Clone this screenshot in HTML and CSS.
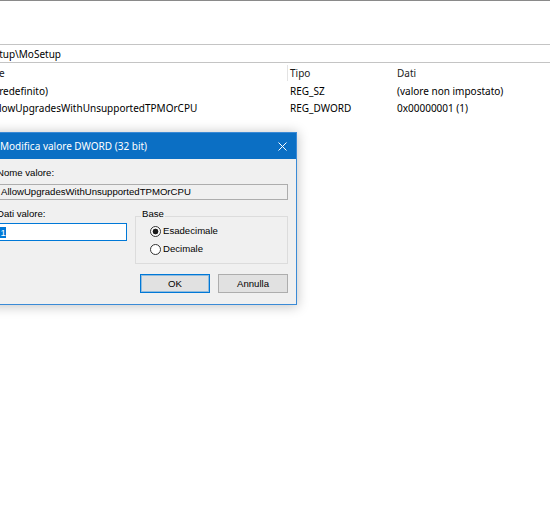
FILE: index.html
```html
<!DOCTYPE html>
<html lang="it">
<head>
<meta charset="utf-8">
<title>Editor del Registro di sistema</title>
<link rel="stylesheet" href="styles.css">
</head>
<body>
<div class="topline"></div>
<div class="address"><div class="addr-path">Computer\HKEY_LOCAL_MACHINE\SYSTEM\Setup\MoSetup</div></div>
<div class="pane">
  <div class="hdr name">Nome</div>
  <div class="hdr tipo">Tipo</div>
  <div class="hdr dati">Dati</div>
  <div class="cell name">(predefinito)</div>
  <div class="cell tipo">REG_SZ</div>
  <div class="cell dati">(valore non impostato)</div>
  <div class="cell name">AllowUpgradesWithUnsupportedTPMOrCPU</div>
  <div class="cell tipo">REG_DWORD</div>
  <div class="cell dati">0x00000001 (1)</div>
</div>

<div class="dialog">
  <div class="titlebar">
    <span class="title">Modifica valore DWORD (32 bit)</span>
    <svg class="close" width="9" height="9" viewBox="0 0 9 9"><path d="M0.5 0.5L8.5 8.5M8.5 0.5L0.5 8.5" stroke="#fff" stroke-width="1" fill="none"/></svg>
  </div>
  <div class="dlg-body">
    <div class="lbl">Nome valore:</div>
    <div class="field ro">AllowUpgradesWithUnsupportedTPMOrCPU</div>
    <div class="lower">
      <div class="col-left">
        <div class="lbl first">Dati valore:</div>
        <div class="field edit"><span class="sel">1</span></div>
      </div>
      <div class="group">
        <div class="group-title">Base</div>
        <div class="radio"><span class="dot checked"></span>Esadecimale</div>
        <div class="radio second"><span class="dot"></span>Decimale</div>
      </div>
    </div>
    <div class="buttons">
      <div class="btn default">OK</div>
      <div class="btn">Annulla</div>
    </div>
  </div>
</div>
</body>
</html>
```
FILE: styles.css
```css
html, body {
  margin: 0;
  height: 100%;
  overflow: hidden;
  background: #fff;
}
body {
  position: relative;
  font-family: "Noto Sans", "DejaVu Sans", sans-serif;
  font-size: 10px;
  color: #000;
}
.topline {
  height: 1px;
  background: #8a8a8a;
}
.address {
  margin-top: 43px;
  height: 17px;
  border-top: 1px solid #c4c4c4;
  border-bottom: 1px solid #c4c4c4;
  display: flex;
  align-items: center;
}
.addr-path {
  flex: none;
  width: 61px;
  display: flex;
  justify-content: flex-end;
  white-space: nowrap;
}
.pane {
  display: grid;
  grid-template-columns: 317px 106px 1fr;
  grid-template-rows: 18px 17px 18px;
  margin-top: 1px;
  margin-left: -29px;
}
.hdr, .cell {
  line-height: 18px;
  white-space: nowrap;
  box-sizing: border-box;
}
.hdr { color: #1a1a1a; }
.hdr.name {
  padding-left: 5px;
  border-right: 1px solid #e3e3e3;
  margin: 1px 0;
  line-height: 16px;
}
.cell.name { padding-left: 19px; }
.tipo { padding-left: 2px; }
.dati { padding-left: 3px; }

.dialog {
  position: absolute;
  left: -10px;
  top: 132px;
  width: 307px;
  box-sizing: border-box;
  border: 1px solid #3a8ad6;
  background: #f0f0f0;
  box-shadow: 0 1px 11px 1px rgba(0, 0, 0, 0.22);
}
.titlebar {
  height: 26px;
  background: #0b6fc4;
  color: #fff;
  display: flex;
  align-items: center;
  justify-content: space-between;
  padding-left: 9px;
}
.title { white-space: nowrap; }
.close {
  flex: none;
  margin-right: 9px;
}
.dlg-body {
  padding: 0 8px 11px 6px;
  font-family: "Liberation Sans", Arial, sans-serif;
  font-size: 9.6px;
}
.lbl {
  line-height: 14px;
  margin-top: 7px;
  white-space: nowrap;
}
.lbl.first { margin-top: 0; }
.field {
  box-sizing: border-box;
  height: 16px;
  margin-top: 4px;
  border: 1px solid #adadad;
  padding-left: 3px;
  line-height: 14px;
  white-space: nowrap;
  overflow: hidden;
}
.field.ro { background: #f0f0f0; }
.field.edit {
  height: 18px;
  margin-top: 2px;
  padding-left: 2px;
  border-color: #0078d7;
  background: #fff;
  display: flex;
  align-items: center;
}
.sel {
  background: #0078d7;
  color: #fff;
  line-height: 11px;
  padding: 0 0.5px;
}
.lower {
  display: grid;
  grid-template-columns: 130px 153px;
  column-gap: 8px;
  align-items: start;
  margin-top: 7px;
}
.group {
  box-sizing: border-box;
  height: 48px;
  margin-top: 9px;
  border: 1px solid #dcdcdc;
}
.group-title {
  width: fit-content;
  margin: -10px 0 0 5px;
  padding: 0 1px;
  background: #f0f0f0;
  line-height: 14px;
}
.radio {
  display: flex;
  align-items: center;
  gap: 2px;
  margin: 3px 0 0 14px;
  line-height: 14px;
}
.radio.second { margin-top: 4px; }
.dot {
  flex: none;
  width: 11px;
  height: 11px;
  box-sizing: border-box;
  border: 1px solid #333;
  border-radius: 50%;
  background: #fff;
}
.dot.checked {
  background: radial-gradient(circle, #1a1a1a 0 2.6px, #fff 3.2px);
}
.buttons {
  display: flex;
  justify-content: flex-end;
  gap: 8px;
  margin-top: 10px;
}
.btn {
  width: 70px;
  height: 19px;
  box-sizing: border-box;
  border: 1px solid #adadad;
  background: #e1e1e1;
  display: flex;
  align-items: center;
  justify-content: center;
}
.btn.default {
  border-color: #0078d7;
  box-shadow: inset 0 0 0 1px rgba(0, 120, 215, 0.35);
}
```
